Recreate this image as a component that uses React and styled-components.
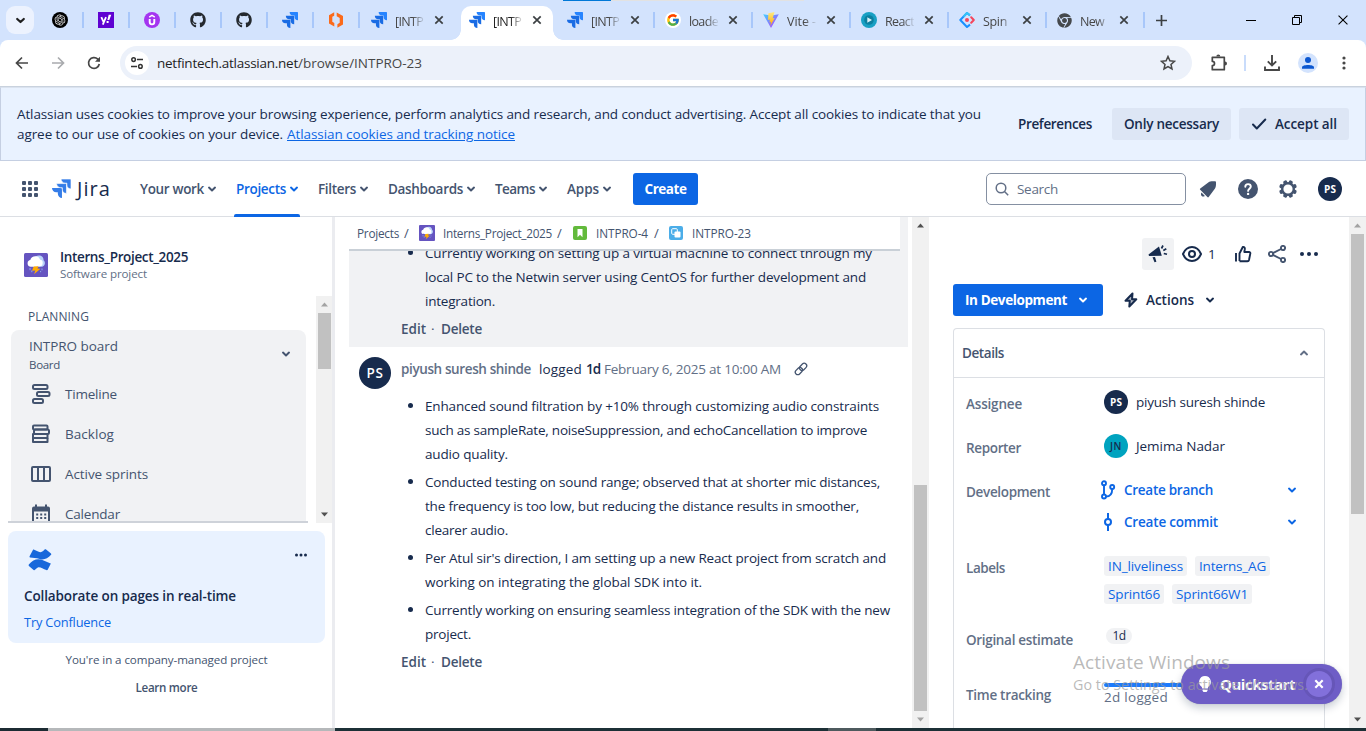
import React, { useLayoutEffect, useRef, useState } from 'react';
import styled, { createGlobalStyle, css } from 'styled-components';
import { FaGithub, FaChrome } from 'react-icons/fa';
import { RiOpenaiFill } from 'react-icons/ri';
import { FcGoogle } from 'react-icons/fc';

const c = {
  ink: '#172b4d',
  subtle: '#44546f',
  faint: '#626f86',
  blue: '#0c66e4',
  line: '#dcdfe4',
  tabs: '#d3e3fd',
  grey: '#f1f2f4',
};

const GlobalStyle = createGlobalStyle`
  * { box-sizing: border-box; }
  html, body { margin: 0; padding: 0; overflow: hidden; }
  body { font-family: 'Open Sans', 'Noto Sans', sans-serif; font-size: 13.5px; color: ${c.ink}; background: #fff; }
  svg { display: block; flex: none; }
`;

/* ---------- text ---------- */

const Line = styled.span`
  display: inline-block;
  white-space: nowrap;
  font-size: ${(p) => p.$size || 13.5}px;
  font-weight: ${(p) => p.$weight || 400};
  color: ${(p) => p.$color || 'inherit'};
  text-decoration: ${(p) => (p.$underline ? 'underline' : 'none')};
`;

/* One line of text whose tracking is adjusted so that it takes up w pixels. */
function Text({ w, size, weight, color, underline, children }) {
  const ref = useRef(null);
  const [spacing, setSpacing] = useState(0);
  useLayoutEffect(() => {
    if (!w) return;
    const natural = ref.current.getBoundingClientRect().width;
    setSpacing((w - natural) / String(children).length);
  }, []);
  return (
    <Line ref={ref} $size={size} $weight={weight} $color={color} $underline={underline} style={{ letterSpacing: spacing }}>
      {children}
    </Line>
  );
}

/* ---------- icons ---------- */

const Svg = ({ s = 16, w, h, vb = '0 0 16 16', children, ...rest }) => (
  <svg width={w || s} height={h || s} viewBox={vb} fill="none" {...rest}>{children}</svg>
);

const Chevron = ({ color = c.subtle, up, s = 10 }) => (
  <Svg s={s} vb="0 0 10 10"><path d={up ? 'M2 6.400 5 3.600l3 2.800' : 'M2 3.600 5 6.400l3-2.800'} stroke={color} strokeWidth="2" strokeLinecap="round" strokeLinejoin="round" /></Svg>
);

const JiraMark = ({ s = 16, light = '#2684ff', dark = '#1a6ce4', gap = 'none' }) => (
  <Svg s={s} vb="0 0 24 24">
    <path fill={dark} d="M11.571 11.513H0a5.218 5.218 0 0 0 5.232 5.215h2.130v2.057A5.215 5.215 0 0 0 12.575 24V12.518a1.005 1.005 0 0 0-1.005-1.005z" />
    <path fill={dark} stroke={gap} strokeWidth=".8" d="M17.294 5.757H5.736a5.215 5.215 0 0 0 5.215 5.214h2.129v2.058a5.218 5.218 0 0 0 5.215 5.214V6.758a1.001 1.001 0 0 0-1.001-1.001z" />
    <path fill={light} stroke={gap} strokeWidth=".8" d="M23.013 0H11.455a5.215 5.215 0 0 0 5.215 5.215h2.129v2.057A5.215 5.215 0 0 0 24 12.483V1.005A1.001 1.001 0 0 0 23.013 0Z" />
  </Svg>
);

const Cross = ({ s = 10, color = '#3c4043', sw = 1.7 }) => (
  <Svg s={s} vb="0 0 10 10"><path d="M1.300 1.300l7.400 7.400M8.700 1.300 1.300 8.700" stroke={color} strokeWidth={sw} /></Svg>
);

const ChatMark = () => (
  <Svg><circle cx="8" cy="8" r="8" fill="#000" /><RiOpenaiFill x="1.5" y="1.5" size={13} color="#e8e8e8" /></Svg>
);

const YahooMark = () => (
  <Svg>
    <path fill="#5f01d1" d="M0 0h16v16H0z" />
    <path d="m3.300 5.200 2.200 4.600M8 5.200 4.800 12.700" stroke="#fff" strokeWidth="1.800" />
    <path fill="#fff" d="M10.700 2.700h2.600l-2 5.300H9.400zM8.600 9.100h2v1.900h-2z" />
  </Svg>
);

const UdemyMark = () => (
  <Svg>
    <circle cx="8" cy="8" r="8" fill="#a435f0" />
    <path d="M5.700 7v3.100c0 3 4.600 3 4.600 0V7" stroke="#fff" strokeWidth="1.900" />
    <path d="M5.200 5.200 8 3.400l2.800 1.800" stroke="#fff" strokeWidth="1.400" />
  </Svg>
);

const BracketMark = () => (
  <Svg><path fill="#fb6a1a" d="M1 3.200 6.200.2v3.500L4.300 4.800v5l2 1.200v3.500L1 11.500zM15 4.100v8.400l-5.600 3.200v-3.500l2.300-1.400V5.900L8.700 4.200V.6z" /></Svg>
);

const ViteMark = () => (
  <Svg>
    <defs>
      <linearGradient id="va" x1="0" y1="0" x2="1" y2="1"><stop stopColor="#41d1ff" /><stop offset="1" stopColor="#bd34fe" /></linearGradient>
      <linearGradient id="vb" x1="0" y1="0" x2="0" y2="1"><stop stopColor="#ffea83" /><stop offset="1" stopColor="#ffa800" /></linearGradient>
    </defs>
    <path fill="url(#va)" d="M.2 2.200 8 16l7.800-13.800L8 3.600z" />
    <path fill="url(#vb)" d="M11.500 0 5.400 1.200 5 7.900l2-.4-.5 2.800 1.600-.4-.8 4.200 4.400-8.200-2 .4z" />
  </Svg>
);

const PlayMark = () => (
  <Svg>
    <circle cx="8" cy="8" r="8" fill="#18a0c4" />
    <circle cx="8" cy="8" r="4.800" fill="#0c7f9f" />
    <path fill="#d9f2f8" d="M6.300 5.200v5.600L11 8z" />
  </Svg>
);

const SpinMark = () => (
  <Svg>
    <path d="M11 3.400 8 1 1.300 8 8 15l3-2.400" stroke="#1890ff" strokeWidth="2" strokeLinejoin="round" />
    <path d="M4.500 4.600 8 1l3 2.400" stroke="#35c3f7" strokeWidth="2" />
    <path d="m12.200 5.300 2.600 2.700-2.600 2.700" stroke="#f5455c" strokeWidth="2" strokeLinecap="round" strokeLinejoin="round" />
    <circle cx="8" cy="8" r="2" fill="#f5455c" />
  </Svg>
);

const StormMark = ({ s }) => (
  <Svg s={s} vb="0 0 24 24">
    <rect width="24" height="24" rx="1.500" fill="#6554c0" />
    <path fill="#b9d3fa" d="M11.500 3.500c4.400-2.400 8.200 0 8.100 3.800 2.300 2 1.500 6.100-1.700 6.500H9z" />
    <path fill="#fff" d="M3.600 10.300c0-2 1.300-3.100 2.700-3.200.6-4.500 8.400-5.700 9.800-.3 2.400 0 3.400 2.700 1.900 5.800-.5 1.200-11.700 1.700-13 .7-.9-.5-1.400-1.700-1.400-3z" />
    <path fill="#ffab00" d="m9.700 13.600 4.900-.3-1.200 2.300 3 .1-6.300 5.600 1.300-3.700-3.400.1z" />
    <path d="M6 15v2.200M7.800 17.500v1.700M18 15.500v1.800M16.600 18v1.200" stroke="#8ea9e8" strokeWidth="1" />
  </Svg>
);

/* ---------- browser frame ---------- */

const Screen = styled.div`
  position: relative;
  width: 1366px;
  height: 731px;
  display: flex;
  flex-direction: column;
  overflow: hidden;
`;

const TabStrip = styled.div`
  height: 40px;
  flex: none;
  display: flex;
  align-items: center;
  background: ${c.tabs};
  position: relative;
`;

const LoadBar = styled.div`
  position: absolute;
  top: 0;
  left: 563px;
  width: 241px;
  height: 1px;
  background: linear-gradient(90deg, #0078d7 48px, #e2e2e2 48px);
`;

const TabMenu = styled.div`
  width: 28px;
  height: 28px;
  flex: none;
  margin: 0 3px 0 6px;
  border-radius: 9px;
  background: #ecf2fe;
  display: grid;
  place-items: center;
`;

const divider = css`
  &::after {
    content: '';
    width: 2px;
    height: 16px;
    background: #a8c7fa;
    position: absolute;
    right: -1px;
    top: ${(p) => p.$ruleTop || 8}px;
  }
`;

const PinnedTab = styled.div`
  position: relative;
  width: 46px;
  height: 32px;
  flex: none;
  display: grid;
  place-items: center;
  ${divider}
`;

const OpenTabs = styled.div`
  margin-left: 1px;
  align-self: flex-end;
  display: flex;
`;

const Tab = styled.div`
  position: relative;
  width: 98px;
  height: 34px;
  flex: none;
  padding: 0 13px 6px 11px;
  display: flex;
  align-items: center;
  z-index: 0;
  ${(p) => p.$divided && divider}
  ${(p) => p.$active && css`
    &::before {
      content: '';
      position: absolute;
      z-index: -1;
      inset: 0 3px 0;
      border-radius: 10px 10px 0 0;
      background: #fff;
    }
  `}
`;

const Flare = styled.span`
  position: absolute;
  bottom: 0;
  ${(p) => p.$side}: -7px;
  width: 10px;
  height: 10px;
  background: radial-gradient(circle at ${(p) => (p.$side === 'left' ? '0 0' : '100% 0')}, transparent 9.5px, #fff 10px);
`;

const TabTitle = styled.span`
  width: 29px;
  height: 20px;
  line-height: 20px;
  margin: 1px 10px 0 8px;
  overflow: hidden;
  color: ${(p) => (p.$active ? '#1f1f1f' : '#474747')};
  mask-image: linear-gradient(90deg, #000 60%, transparent 105%);
`;

const WindowButtons = styled.div`
  margin-left: auto;
  display: flex;
`;

const WindowButton = styled.div`
  width: 46px;
  display: grid;
  place-items: center;
`;

const NewTab = styled.div`
  width: 34px;
  display: grid;
  place-items: center;
`;

const Toolbar = styled.div`
  height: 46px;
  flex: none;
  display: flex;
  align-items: center;
  background: #fff;
  border-radius: 8px 8px 0 0;
  padding: 0 4px 0 10px;
`;

const ToolbarBack = styled.div`
  background: linear-gradient(${c.tabs} 10px, #fff 10px);
  border-bottom: 1px solid #c9d2de;
`;

const ToolButton = styled.div`
  width: ${(p) => p.$w || 36}px;
  flex: none;
  display: grid;
  place-items: center;
`;

const Omnibox = styled.div`
  width: 1072px;
  height: 34px;
  flex: none;
  margin-left: 14px;
  border-radius: 17px;
  background: #ecf1fa;
  display: flex;
  align-items: center;
  padding: 0 16px 0 5px;
  color: #474747;
`;

const SiteInfo = styled.div`
  width: 24px;
  height: 24px;
  border-radius: 50%;
  background: #fff;
  display: grid;
  place-items: center;
  margin-right: 8px;
`;

const StarSlot = styled.div` margin-left: auto; `;

const ToolDivider = styled.div`
  width: 2px;
  height: 16px;
  background: #c9dcfb;
  margin-right: 8px;
`;

/* ---------- cookie banner ---------- */

const Banner = styled.div`
  height: 74px;
  flex: none;
  border: 1px solid #c5cfe2;
  border-top-color: #dbe3ef;
  background: #e9f2ff;
  display: flex;
  align-items: center;
  padding: 0 0 0 16px;
`;

const BannerCopy = styled.div`
  width: 989px;
  flex: none;
  line-height: 20px;
  display: flex;
  flex-direction: column;
`;

const BannerRow = styled.div` display: flex; gap: 4px; height: 20px; `;

const BannerButton = styled.div`
  height: 32px;
  flex: none;
  display: flex;
  align-items: center;
  gap: 8px;
  padding: 0 12px;
  margin-right: 8px;
  border-radius: 3px;
  background: ${(p) => (p.$plain ? 'none' : '#dde6f5')};
`;

/* ---------- product navigation ---------- */

const ProductNav = styled.div`
  height: 56px;
  flex: none;
  border-bottom: 1px solid ${c.line};
  display: flex;
  align-items: center;
  padding: 0 24px 0 22px;
`;

const Wordmark = styled.div`
  width: 63px;
  margin-left: 14px;
  display: flex;
  align-items: center;
  gap: 6px;
`;

const NavItem = styled.div`
  height: 56px;
  margin-left: ${(p) => p.$gap}px;
  margin-top: 1px;
  display: flex;
  align-items: center;
  gap: 3px;
  position: relative;
  color: ${(p) => (p.$active ? c.blue : c.subtle)};
  ${(p) => p.$active && css`
    &::after {
      content: '';
      position: absolute;
      left: -2px;
      right: -1px;
      bottom: 0;
      height: 3px;
      border-radius: 2px 2px 0 0;
      background: ${c.blue};
    }
  `}
`;

const CreateButton = styled.div`
  width: 65px;
  height: 32px;
  margin-left: 21px;
  border-radius: 3px;
  background: ${c.blue};
  color: #fff;
  display: grid;
  place-items: center;
`;

const SearchBox = styled.div`
  width: 200px;
  height: 32px;
  margin: 0 10px 0 auto;
  border: 1px solid #8590a2;
  border-radius: 5px;
  display: flex;
  align-items: center;
  gap: 8px;
  padding: 0 8px;
`;

const NavIcons = styled.div`
  display: flex;
  align-items: center;
  & > * + * { margin-left: 16px; }
  & > :last-child { margin-left: 18px; }
`;

const IconBox = styled.div`
  width: ${(p) => p.$s || 24}px;
  height: ${(p) => p.$s || 24}px;
  display: grid;
  place-items: center;
`;

const Avatar = styled.div`
  width: ${(p) => p.$s}px;
  height: ${(p) => p.$s}px;
  flex: none;
  border-radius: 50%;
  background: ${(p) => p.$bg || c.ink};
  color: ${(p) => p.$fg || '#fff'};
  display: grid;
  place-items: center;
`;

/* ---------- sidebar ---------- */

const Body = styled.div`
  height: 511px;
  flex: none;
  display: flex;
`;

const Sidebar = styled.aside`
  width: 335px;
  border-right: 3px solid #ebecf0;
  overflow: hidden;
`;

const ProjectHead = styled.div`
  height: 79px;
  padding: 30px 0 0 24px;
  display: flex;
  gap: 12px;
`;

const ProjectIcon = styled.div` margin-top: 6px; `;

const ProjectName = styled.div`
  display: flex;
  flex-direction: column;
  align-items: flex-start;
  line-height: 20px;
  & > :last-child { line-height: 14px; }
`;

const SideScroll = styled.div`
  height: 227px;
  display: flex;
  justify-content: space-between;
`;

const SideList = styled.div`
  width: 300px;
  margin-left: 8px;
  height: 227px;
  border-bottom: 2px solid #ced2d9;
  overflow: hidden;
`;

const GroupTitle = styled.div`
  height: 34px;
  padding: 10px 0 0 20px;
  line-height: 20px;
`;

const BoardCard = styled.div`
  margin: 0 1px 0 3px;
  width: 295px;
  height: 200px;
  border-radius: 8px 8px 0 0;
  background: ${c.grey};
  color: ${c.subtle};
`;

const BoardHead = styled.div`
  height: 44px;
  padding: 6px 15px 0 18px;
  display: flex;
  justify-content: space-between;
`;

const BoardName = styled.div`
  display: flex;
  flex-direction: column;
  align-items: flex-start;
  line-height: 20px;
  & > :last-child { line-height: 17px; }
`;

const ChevronSlot = styled.div` padding-top: 13px; `;

const SideItem = styled.div`
  height: 40px;
  display: flex;
  align-items: center;
  gap: 12px;
  padding-left: 18px;
`;

const Promo = styled.div`
  width: 317px;
  height: 112px;
  margin: 8px 0 0 8px;
  padding: 16px 16px 0;
  border-radius: 8px;
  background: #e9f2ff;
`;

const PromoTop = styled.div`
  height: 39px;
  display: flex;
  justify-content: space-between;
`;

const PromoLine = styled.div`
  height: 26px;
  line-height: 20px;
`;

const SideFoot = styled.div`
  display: flex;
  flex-direction: column;
  align-items: center;
  padding: 3px 0 0 1px;
  line-height: 28px;
`;

const Scroller = styled.div`
  width: ${(p) => p.$w || 17}px;
  flex: none;
  background: #f1f1f1;
  display: flex;
  flex-direction: column;
  align-items: center;
  justify-content: space-between;
  padding: 6px 0;
  position: relative;
`;

const Thumb = styled.div`
  position: absolute;
  left: 2px;
  width: 13px;
  top: ${(p) => p.$top}px;
  height: ${(p) => p.$h}px;
  background: #c1c1c1;
`;

function Scrollbar({ w, top, h, up, down }) {
  return (
    <Scroller $w={w}>
      <Svg w={7} h={5} vb="0 0 7 5"><path d="M0 4.500 3.500.5 7 4.500z" fill={up} /></Svg>
      <Thumb $top={top} $h={h} />
      <Svg w={7} h={5} vb="0 0 7 5"><path d="M0 .5 3.500 4.500 7 .5z" fill={down} /></Svg>
    </Scroller>
  );
}

/* ---------- work log ---------- */

const Main = styled.main`
  width: 577px;
  padding-left: 14px;
`;

const GreyComment = styled.div`
  width: 559px;
  height: 130px;
  background: ${c.grey};
`;

const Crumbs = styled.div`
  width: 551px;
  height: 34px;
  padding-left: 8px;
  background: #fff;
  border-bottom: 2px solid #c9d0d7;
  color: ${c.subtle};
  display: flex;
  align-items: center;
`;

const Space = styled.span` width: ${(p) => p.$w}px; flex: none; `;

const Clip = styled.div`
  height: 96px;
  overflow: hidden;
  padding-left: 52px;
`;

const Pulled = styled.div` margin-top: -10px; `;

const Bullets = styled.ul`
  margin: 0;
  padding: 0;
  list-style: none;
`;

const Bullet = styled.li`
  position: relative;
  margin-bottom: 4px;
  padding-left: 24px;
  line-height: 24px;
  display: flex;
  flex-direction: column;
  &::before {
    content: '';
    position: absolute;
    left: 7px;
    top: 9px;
    width: 5px;
    height: 5px;
    border-radius: 50%;
    background: ${c.ink};
  }
  & > span { align-self: flex-start; height: 24px; }
`;

const CommentActions = styled.div`
  height: 24px;
  line-height: 24px;
  display: flex;
  color: ${c.subtle};
  gap: 5px;
`;

const Worklog = styled.div`
  display: flex;
  gap: 10px;
  padding: 10px 0 0 10px;
`;

const WorkHead = styled.div`
  height: 24px;
  display: flex;
  align-items: center;
  margin-bottom: 13px;
`;

/* ---------- details ---------- */

const Side = styled.section`
  width: 420px;
  padding: 21px 24px 0;
`;

const IssueTools = styled.div`
  height: 32px;
  display: flex;
  justify-content: flex-end;
  align-items: center;
  padding-right: 7px;
`;

const Megaphone = styled.div`
  width: 32px;
  height: 32px;
  border-radius: 3px;
  background: ${c.grey};
  display: grid;
  place-items: center;
`;

const ToolSlot = styled.div` margin-left: ${(p) => p.$l}px; `;

const StatusRow = styled.div`
  height: 32px;
  margin: 14px 0 12px;
  display: flex;
  align-items: center;
`;

const StatusButton = styled.div`
  width: 150px;
  height: 32px;
  border-radius: 3px;
  background: ${c.blue};
  color: #fff;
  padding: 0 15px 0 12px;
  display: flex;
  align-items: center;
  justify-content: space-between;
`;

const ActionsButton = styled.div`
  display: flex;
  align-items: center;
  margin-left: 21px;
`;

const Panel = styled.div`
  width: 372px;
  height: 400px;
  border: 1px solid ${c.line};
  border-bottom: 0;
  border-radius: 4px 4px 0 0;
`;

const PanelHead = styled.div`
  height: 49px;
  padding: 0 15px 0 8px;
  border-bottom: 1px solid ${c.line};
  display: flex;
  align-items: center;
  justify-content: space-between;
`;

const Field = styled.div`
  height: ${(p) => p.$h}px;
  padding-left: 12px;
  display: grid;
  grid-template-columns: 138px 1fr;
`;

const Label = styled.div`
  line-height: 20px;
  padding-top: ${(p) => p.$t || 16}px;
`;

const Person = styled.div`
  display: flex;
  align-items: center;
  gap: 8px;
  height: 24px;
  margin-top: 12px;
`;

const DevList = styled.div` padding-top: 8px; `;

const DevRow = styled.div`
  height: 32px;
  display: flex;
  align-items: center;
  margin-left: -6px;
`;

const DevText = styled.div` width: 163px; margin-left: 6px; `;

const Tags = styled.div`
  display: flex;
  flex-wrap: wrap;
  gap: 8px;
  align-content: flex-start;
  padding: 14px 40px 0 0;
`;

const Tag = styled.div`
  height: 20px;
  line-height: 20px;
  padding: 0 4px;
  border-radius: 3px;
  background: ${c.grey};
  color: ${c.blue};
`;

const Pill = styled.div`
  width: 26px;
  height: 16px;
  margin: 5px 0 0 2px;
  border-radius: 8px;
  background: ${c.grey};
  display: grid;
  place-items: center;
  line-height: 16px;
`;

const Track = styled.div`
  height: 4px;
  width: 204px;
  background: #1d7afc;
  border-radius: 2px;
`;

const Tracking = styled.div` padding-top: 4px; line-height: 20px; `;

/* ---------- overlays ---------- */

const Quickstart = styled.div`
  position: absolute;
  left: 1181px;
  top: 664px;
  width: 161px;
  height: 40px;
  border-radius: 20px;
  background: #6e5dc6;
  color: #fff;
  display: flex;
  align-items: center;
  padding-left: 17px;
  box-shadow: 0 4px 8px rgba(9, 30, 66, .22), 0 0 1px rgba(9, 30, 66, .3);
`;

const QuickClose = styled.div`
  width: 26px;
  height: 26px;
  margin-left: 11px;
  border-radius: 50%;
  background: #8270db;
  box-shadow: 0 0 0 3px #6656b8;
  display: grid;
  place-items: center;
`;

const BulbSlot = styled.div` margin-right: 8px; `;

const Watermark = styled.div`
  position: absolute;
  left: 1073px;
  top: 649px;
  color: rgba(155, 155, 155, .7);
  display: flex;
  flex-direction: column;
  align-items: flex-start;
  & > :first-child { line-height: 26px; }
  & > :last-child { line-height: 20px; }
`;

const Taskbar = styled.div`
  height: 3px;
  flex: none;
  background: linear-gradient(90deg, #1c2b33 48px, #b5b8ba 48px 335px, #1c3036 335px 828px, #4e5a5e 828px 876px, #1c3036 876px);
`;

/* ---------- data ---------- */

const GithubMark = () => <FaGithub size={16} color="#24292f" />;
const ChromeMark = () => <FaChrome size={15} color="#45494d" />;
const GoogleMark = () => <Svg><circle cx="8" cy="8" r="8" fill="#fff" /><FcGoogle size={14} x="1" y="1" /></Svg>;

const pinned = [ChatMark, YahooMark, UdemyMark, GithubMark, GithubMark, JiraMark, BracketMark];

const tabs = [
  { icon: JiraMark, title: '[INTP', w: 28 },
  { icon: JiraMark, title: '[INTP', w: 28, active: true },
  { icon: JiraMark, title: '[INTP', w: 28, divided: true },
  { icon: GoogleMark, title: 'loade', w: 29, divided: true },
  { icon: ViteMark, title: 'Vite -', w: 29, divided: true },
  { icon: PlayMark, title: 'React', w: 29, divided: true },
  { icon: SpinMark, title: 'Spin', w: 24, divided: true },
  { icon: ChromeMark, title: 'New', w: 24, divided: true },
];

const navItems = [
  ['Your work', 64, 25], ['Projects', 50, 19, true], ['Filters', 38, 19], ['Dashboards', 75, 19], ['Teams', 40, 19], ['Apps', 32, 19],
];

const stroke = { stroke: c.subtle, strokeWidth: 2, strokeLinejoin: 'round' };
const sideItems = [
  ['Timeline', 52, <><rect x="3" y="2" width="14.500" height="4" rx="1.500" {...stroke} /><rect x="7" y="9" width="12.500" height="4" rx="1.500" {...stroke} /><rect x="3" y="16" width="10" height="4" rx="1.500" {...stroke} /></>],
  ['Backlog', 49, <><rect x="3" y="2.500" width="14.500" height="4" rx="1" {...stroke} /><rect x="4" y="6.500" width="15" height="4.500" rx="1.500" {...stroke} /><rect x="3" y="11" width="14.500" height="4" {...stroke} /><path d="M3 15v4h14.500v-4" {...stroke} /></>],
  ['Active sprints', 83, <><rect x="2" y="4" width="18" height="14" rx="1" {...stroke} /><path d="M8 4v14M14 4v14" {...stroke} /></>],
  ['Calendar', 55, <><rect x="3" y="4.500" width="16" height="15" rx="1" {...stroke} /><path fill={c.subtle} d="M3 4h16v4.500H3zM5 1.500h2v3H5zM15 1.500h2v3h-2z" /><path d="M6.200 11.500h10M6.200 15h10" stroke={c.subtle} strokeWidth="2" strokeDasharray="2 2" /></>],
];

const log = [
  [['Enhanced sound filtration by +10% through customizing audio constraints', 454], ['such as sampleRate, noiseSuppression, and echoCancellation to improve', 442], ['audio quality.', 83]],
  [['Conducted testing on sound range; observed that at shorter mic distances,', 455], ['the frequency is too low, but reducing the distance results in smoother,', 434], ['clearer audio.', 83]],
  [["Per Atul sir's direction, I am setting up a new React project from scratch and", 461], ['working on integrating the global SDK into it.', 277]],
  [['Currently working on ensuring seamless integration of the SDK with the new', 465], ['project.', 46]],
];

const EditDelete = () => (
  <CommentActions>
    <Text w={25} weight={600}>Edit</Text>
    <Text w={5}>·</Text>
    <Text w={41} weight={600}>Delete</Text>
  </CommentActions>
);

const Dots = ({ s = 20, color = c.ink, r = 2 }) => (
  <Svg w={s} h={6} vb={`0 0 ${s} 6`}><circle cx={r} cy="3" r={r} fill={color} /><circle cx={s / 2} cy="3" r={r} fill={color} /><circle cx={s - r} cy="3" r={r} fill={color} /></Svg>
);

/* ---------- page ---------- */

function Browser() {
  return (
    <>
      <TabStrip>
        <LoadBar />
        <TabMenu><Chevron color="#1f1f1f" s={11} /></TabMenu>
        {pinned.map((Icon, i) => <PinnedTab key={i}><Icon /></PinnedTab>)}
        <OpenTabs>
          {tabs.map(({ icon: Icon, title, w, active, divided }, i) => (
            <Tab key={i} $active={active} $divided={divided} $ruleTop={6}>
              {active && <><Flare $side="left" /><Flare $side="right" /></>}
              <Icon />
              <TabTitle $active={active}><Text size={12.5} w={w}>{title}</Text></TabTitle>
              <Cross />
            </Tab>
          ))}
        </OpenTabs>
        <NewTab><Svg s={11} vb="0 0 11 11"><path d="M5.500 0v11M0 5.500h11" stroke="#3c4043" strokeWidth="1.700" /></Svg></NewTab>
        <WindowButtons>
          <WindowButton><Svg s={10} vb="0 0 10 10"><path d="M0 5.500h10" stroke="#000" /></Svg></WindowButton>
          <WindowButton><Svg s={10} vb="0 0 10 10"><path d="M.5 2.500h7v7h-7zM2.500 2.500v-2h7v7h-2" stroke="#000" /></Svg></WindowButton>
          <WindowButton><Cross s={12} color="#000" sw={0.9} /></WindowButton>
        </WindowButtons>
      </TabStrip>
      <ToolbarBack>
        <Toolbar>
          <ToolButton $w={24}><Svg s={14} vb="0 0 14 14"><path d="M13 7H2M7 1.500 1.500 7 7 12.500" stroke="#474747" strokeWidth="1.700" /></Svg></ToolButton>
          <ToolButton $w={48}><Svg s={14} vb="0 0 14 14"><path d="M1 7h11M7 1.500 12.500 7 7 12.500" stroke="#a9abae" strokeWidth="1.700" /></Svg></ToolButton>
          <ToolButton $w={24}><Svg s={14} vb="0 0 14 14"><path d="M12.300 8A5.400 5.400 0 1 1 10.800 3.200L12.500 5" stroke="#474747" strokeWidth="1.700" /><path d="M13 .8v5H8z" fill="#474747" /></Svg></ToolButton>
          <Omnibox>
            <SiteInfo><Svg s={14} vb="0 0 14 14"><circle cx="3.600" cy="3.600" r="1.800" stroke="#333" strokeWidth="1.500" /><circle cx="10.400" cy="10.400" r="1.800" stroke="#333" strokeWidth="1.500" /><path d="M7 3.600h6M1 10.400h6" stroke="#333" strokeWidth="1.500" /></Svg></SiteInfo>
            <Text w={141} size={13.5} color="#1f1f1f">netfintech.atlassian.net</Text>
            <Text w={124} size={13.5}>/browse/INTPRO-23</Text>
            <StarSlot><Svg><path d="m8 1.500 1.900 4.300 4.600.5-3.500 3.100 1 4.600L8 11.600 4 14l1-4.600-3.500-3.100 4.600-.5z" stroke="#474747" strokeWidth="1.500" /></Svg></StarSlot>
          </Omnibox>
          <ToolButton $w={52}><Svg s={18} vb="0 0 18 18"><path d="M3.300 3.300h12v12.400h-12v-4a2.200 2.200 0 0 0 0-4.400z" stroke="#474747" strokeWidth="1.700" strokeLinejoin="round" /><path d="M7.300 2.600a2 2 0 0 1 4 0zM16 7.400a2 2 0 0 1 0 4z" fill="#474747" /></Svg></ToolButton>
          <ToolDivider />
          <ToolButton $w={36}><Svg s={16}><path d="M8 0v10M3.800 6.300 8 10.500l4.200-4.200M1 11.500V15h14v-3.500" stroke="#474747" strokeWidth="1.900" /></Svg></ToolButton>
          <ToolButton $w={36}><Svg s={20} vb="0 0 20 20"><circle cx="10" cy="10" r="10" fill="#d3e3fd" /><circle cx="10" cy="7" r="3" fill="#0b57d0" /><path d="M4 15.800v-1.500c0-3.200 12-3.200 12 0v1.500z" fill="#0b57d0" /></Svg></ToolButton>
          <ToolButton $w={36}><Svg w={4} h={14} vb="0 0 4 14"><circle cx="2" cy="2" r="1.600" fill="#474747" /><circle cx="2" cy="7" r="1.600" fill="#474747" /><circle cx="2" cy="12" r="1.600" fill="#474747" /></Svg></ToolButton>
        </Toolbar>
      </ToolbarBack>
    </>
  );
}

function CookieBanner() {
  return (
    <Banner>
      <BannerCopy>
        <BannerRow><Text w={964}>Atlassian uses cookies to improve your browsing experience, perform analytics and research, and conduct advertising. Accept all cookies to indicate that you</Text></BannerRow>
        <BannerRow>
          <Text w={266}>agree to our use of cookies on your device.</Text>
          <Text w={228} color={c.blue} underline>Atlassian cookies and tracking notice</Text>
        </BannerRow>
      </BannerCopy>
      <BannerButton $plain><Text w={74} weight={600}>Preferences</Text></BannerButton>
      <BannerButton><Text w={95} weight={600}>Only necessary</Text></BannerButton>
      <BannerButton>
        <Svg><path d="m2 8.500 3.800 4L14.300 3.500" stroke={c.ink} strokeWidth="2" strokeLinecap="round" strokeLinejoin="round" /></Svg>
        <Text w={62} weight={600}>Accept all</Text>
      </BannerButton>
    </Banner>
  );
}

function Nav() {
  return (
    <ProductNav>
      <Svg s={16}>{[0, 6, 12].map((x) => [0, 6, 12].map((y) => <rect key={x + '-' + y} x={x} y={y} width="4" height="4" rx="1" fill={c.subtle} />))}</Svg>
      <Wordmark><JiraMark s={19} light="#357de8" dark="#357de8" gap="#fff" /><Text w={34} size={20} weight={500}>Jira</Text></Wordmark>
      {navItems.map(([label, w, gap, active]) => (
        <NavItem key={label} $gap={gap} $active={active}>
          <Text w={w} weight={600}>{label}</Text>
          <Chevron color={active ? c.blue : c.subtle} />
        </NavItem>
      ))}
      <CreateButton><Text w={42} weight={700}>Create</Text></CreateButton>
      <SearchBox>
        <Svg s={14} vb="0 0 14 14"><circle cx="6" cy="6" r="4.800" stroke={c.faint} strokeWidth="1.500" /><path d="m9.500 9.500 3.700 3.700" stroke={c.faint} strokeWidth="1.500" /></Svg>
        <Text w={41} color={c.faint}>Search</Text>
      </SearchBox>
      <NavIcons>
        <IconBox><Svg s={18} vb="0 0 18 18"><path fill={c.subtle} d="M1.300 8.600 9.600 2.200c1.200-.9 2.600-1 6.500-.9.600 0 .9.400.9.900.1 3.700-.2 5.200-1 6.300L9.700 17c-.4.500-.9.500-1.300 0L1.200 9.800c-.4-.4-.4-.9.100-1.200zM2.500 12.500l3.400 3.400c-1.200 1-2.400.9-3.200.1-.9-.9-1-2.300-.2-3.500z" /></Svg></IconBox>
        <IconBox><Svg s={20} vb="0 0 20 20"><circle cx="10" cy="10" r="10" fill={c.subtle} /><path d="M7.300 7.800c0-3.700 5.500-3.500 5.500-.2 0 2-2.700 2.200-2.700 4.300" stroke="#fff" strokeWidth="1.900" strokeLinecap="round" /><circle cx="10.100" cy="14.900" r="1.200" fill="#fff" /></Svg></IconBox>
        <IconBox><Svg s={20} vb="0 0 20 20"><g fill={c.subtle}>{[0, 45, 90, 135, 180, 225, 270, 315].map((a) => <rect key={a} x="8" y="1" width="4" height="5" rx="1.500" transform={`rotate(${a + 22.5} 10 10)`} />)}</g><circle cx="10" cy="10" r="5.800" stroke={c.subtle} strokeWidth="2.400" fill="#fff" /></Svg></IconBox>
        <Avatar $s={24}><Text size={10} w={12} weight={700}>PS</Text></Avatar>
      </NavIcons>
    </ProductNav>
  );
}

function ProjectSidebar() {
  return (
    <Sidebar>
      <ProjectHead>
        <ProjectIcon><StormMark s={24} /></ProjectIcon>
        <ProjectName>
          <Text w={128} weight={600}>Interns_Project_2025</Text>
          <Text w={87} size={11.6} color={c.faint}>Software project</Text>
        </ProjectName>
      </ProjectHead>
      <SideScroll>
        <SideList>
          <GroupTitle><Text w={61} size={12} weight={500} color={c.subtle}>PLANNING</Text></GroupTitle>
          <BoardCard>
            <BoardHead>
              <BoardName><Text w={89}>INTPRO board</Text><Text w={31} size={11.5}>Board</Text></BoardName>
              <ChevronSlot><Chevron /></ChevronSlot>
            </BoardHead>
            {sideItems.map(([label, w, art]) => (
              <SideItem key={label}><Svg s={24} vb="-1 -1 24 24">{art}</Svg><Text w={w}>{label}</Text></SideItem>
            ))}
          </BoardCard>
        </SideList>
        <Scrollbar w={16} top={17} h={56} up="#a3a3a3" down="#505050" />
      </SideScroll>
      <Promo>
        <PromoTop>
          <Svg s={32} vb="0 0 32 32">
            <path fill="#1868db" d="M5.300 8.300 8.600 2c.3-.5.800-.6 1.300-.3l3.900 1.900c2.300 1.100 3.500.8 5-.5l1.500-1.500c.5-.4 1-.5 1.500-.1l4.900 4c.4.4.4.9.1 1.300-4.200 5-8.700 5.600-14.100 3.500L5.700 9.500c-.5-.3-.7-.7-.4-1.200zM26.700 15.300l-3.300 6.500c-.3.500-.8.600-1.300.3-3.600-1.700-6.600-3.600-8.600-2.700-.9.400-1.800 1.300-2.800 2.400-.4.500-.9.500-1.400.1l-4.700-4c-.4-.4-.4-.9-.1-1.300 4.500-5.500 9.400-6.400 14.800-4.100l7 3.100" transform="translate(.3 1)" />
          </Svg>
          <IconBox $s={16}><Dots s={12} r={1.5} /></IconBox>
        </PromoTop>
        <PromoLine><Text w={212} weight={600}>Collaborate on pages in real-time</Text></PromoLine>
        <PromoLine><Text w={87} size={12.8} color={c.blue}>Try Confluence</Text></PromoLine>
      </Promo>
      <SideFoot>
        <Text w={202} size={11.6} color={c.subtle}>You're in a company-managed project</Text>
        <Text w={62} size={11.6} weight={600} color={c.subtle}>Learn more</Text>
      </SideFoot>
    </Sidebar>
  );
}

const Slash = () => <Text w={5} size={13}>/</Text>;

function WorkLog() {
  return (
    <Main>
      <GreyComment>
        <Crumbs>
          <Text w={42} size={11.8}>Projects</Text><Space $w={5} /><Slash /><Space $w={10} />
          <StormMark s={16} /><Space $w={8} /><Text w={109} size={11.8}>Interns_Project_2025</Text><Space $w={5} /><Slash /><Space $w={11} />
          <Svg s={14} vb="0 0 14 14"><rect width="14" height="14" rx="2" fill="#63ba3c" /><path fill="#fff" d="M4.500 3h5v8.200L7 8.800l-2.500 2.400z" /></Svg>
          <Space $w={9} /><Text w={52} size={11.8}>INTPRO-4</Text><Space $w={6} /><Slash /><Space $w={10} />
          <Svg s={14} vb="0 0 14 14"><rect width="14" height="14" rx="2" fill="#4bade8" /><rect x="2.700" y="2.700" width="5.600" height="5.600" rx="1" stroke="#fff" /><rect x="5.500" y="5.500" width="6" height="6" rx="1" fill="#fff" /></Svg>
          <Space $w={9} /><Text w={59} size={11.8}>INTPRO-23</Text>
        </Crumbs>
        <Clip>
          <Pulled>
            <Bullets>
              <Bullet>
                <Text w={447}>Currently working on setting up a virtual machine to connect through my</Text>
                <Text w={441}>local PC to the Netwin server using CentOS for further development and</Text>
                <Text w={70}>integration.</Text>
              </Bullet>
            </Bullets>
            <EditDelete />
          </Pulled>
        </Clip>
      </GreyComment>
      <Worklog>
        <Avatar $s={32}><Text size={13.5} w={17} weight={600}>PS</Text></Avatar>
        <div>
          <WorkHead>
            <Text w={130} weight={600} color={c.faint}>piyush suresh shinde</Text>
            <Space $w={8} /><Text w={43}>logged</Text>
            <Space $w={4} /><Text w={14} weight={600}>1d</Text>
            <Space $w={4} /><Text w={177} color={c.faint}>February 6, 2025 at 10:00 AM</Text>
            <Space $w={13} />
            <Svg s={14} vb="0 0 14 14"><g transform="rotate(-45 7 7)" stroke={c.subtle} strokeWidth="1.300"><rect x="0" y="4.500" width="8" height="5" rx="2.500" /><rect x="6" y="4.500" width="8" height="5" rx="2.500" /></g></Svg>
          </WorkHead>
          <Bullets>
            {log.map((lines) => <Bullet key={lines[0][0]}>{lines.map(([t, w]) => <Text key={t} w={w}>{t}</Text>)}</Bullet>)}
          </Bullets>
          <EditDelete />
        </div>
      </Worklog>
    </Main>
  );
}

const FieldName = ({ w, t, children }) => <Label $t={t}><Text w={w} weight={600} color={c.faint}>{children}</Text></Label>;

function Details() {
  return (
    <Side>
      <IssueTools>
        <Megaphone><Svg s={20} vb="0 0 20 20"><path fill={c.ink} d="m.5 10.500 10.500-8 2.800 9.200L1 12zM4.500 13.200l2.500-.2 1.400 4.700-1.900.5z" /><path d="M13.500 4.500 15 1.500M15.300 6.500l3-1.800M15.800 9.500l3.200.8" stroke={c.ink} strokeWidth="1.700" /></Svg></Megaphone>
        <ToolSlot $l={8}><Svg w={20} h={16} vb="0 0 20 16"><path d="M1 8c4-9.300 14-9.300 18 0-4 9.300-14 9.300-18 0z" stroke={c.ink} strokeWidth="2" /><circle cx="10" cy="8" r="3" stroke={c.ink} strokeWidth="2" /></Svg></ToolSlot>
        <ToolSlot $l={6}><Text w={7}>1</Text></ToolSlot>
        <ToolSlot $l={19}><Svg s={18} vb="0 0 18 18"><path d="M2 8v8.500M5.500 16V8.500L8.800 2c1.700-.3 2.200.8 2 2.200L10.300 7H15c1 0 1.500.8 1.300 1.600L15 15c-.2.800-.7 1.200-1.500 1.200H5.500" stroke={c.ink} strokeWidth="1.900" strokeLinejoin="round" /></Svg></ToolSlot>
        <ToolSlot $l={16}><Svg s={18} vb="0 0 18 18"><g stroke={c.subtle} strokeWidth="1.900"><circle cx="3" cy="9" r="2.100" /><circle cx="15" cy="3" r="2.100" /><circle cx="15" cy="15" r="2.100" /><path d="M4.900 8.100 13 4M4.900 9.900 13 14" /></g></Svg></ToolSlot>
        <ToolSlot $l={14}><Dots s={18} /></ToolSlot>
      </IssueTools>
      <StatusRow>
        <StatusButton><Text w={102} weight={700}>In Development</Text><Chevron color="#fff" /></StatusButton>
        <ActionsButton>
          <Svg w={14} h={16} vb="0 0 14 16"><path d="M8.500 1.500 1.500 8.700h4.300L5.300 14.500l7-7.200H8z" fill={c.ink} fillOpacity=".35" stroke={c.ink} strokeWidth="2" strokeLinejoin="round" /></Svg>
          <Space $w={8} /><Text w={48} weight={600}>Actions</Text><Space $w={11} /><Chevron color={c.ink} />
        </ActionsButton>
      </StatusRow>
      <Panel>
        <PanelHead><Text w={42} weight={600} color={c.subtle}>Details</Text><Chevron up color={c.faint} /></PanelHead>
        <Field $h={44}><FieldName w={56}>Assignee</FieldName><Person><Avatar $s={24}><Text size={10} w={12} weight={700}>PS</Text></Avatar><Text w={129}>piyush suresh shinde</Text></Person></Field>
        <Field $h={44}><FieldName w={55}>Reporter</FieldName><Person><Avatar $s={24} $bg="#00a3bf" $fg={c.ink}><Text size={10} w={12} weight={600}>JN</Text></Avatar><Text w={89}>Jemima Nadar</Text></Person></Field>
        <Field $h={76}>
          <FieldName w={84}>Development</FieldName>
          <DevList>
            <DevRow>
              <Svg w={20} h={20} vb="0 0 20 20"><g stroke={c.blue} strokeWidth="1.900"><circle cx="6" cy="3.300" r="2" /><circle cx="6" cy="16.500" r="2" /><circle cx="14.200" cy="7" r="2" /><path d="M6 5.500v9M8 16.500c5 0 6.200-3 6.200-7.500" /></g></Svg>
              <DevText><Text w={89} weight={600} color={c.blue}>Create branch</Text></DevText><Chevron color={c.blue} />
            </DevRow>
            <DevRow>
              <Svg w={20} h={20} vb="0 0 20 20"><g stroke={c.blue} strokeWidth="2"><circle cx="10" cy="10" r="3" /><path d="M10 1v6M10 13v6" /></g></Svg>
              <DevText><Text w={94} weight={600} color={c.blue}>Create commit</Text></DevText><Chevron color={c.blue} />
            </DevRow>
          </DevList>
        </Field>
        <Field $h={81}>
          <FieldName w={39}>Labels</FieldName>
          <Tags>
            <Tag><Text w={75}>IN_liveliness</Text></Tag><Tag><Text w={67}>Interns_AG</Text></Tag>
            <Tag><Text w={52}>Sprint66</Text></Tag><Tag><Text w={72}>Sprint66W1</Text></Tag>
          </Tags>
        </Field>
        <Field $h={56}><FieldName w={107} t={7}>Original estimate</FieldName><div><Pill><Text w={13} size={12}>1d</Text></Pill></div></Field>
        <Field $h={44}><FieldName w={85} t={6}>Time tracking</FieldName><Tracking><Track /><Text w={64} color={c.faint}>2d logged</Text></Tracking></Field>
      </Panel>
    </Side>
  );
}

export default function App() {
  return (
    <Screen>
      <GlobalStyle />
      <Browser />
      <CookieBanner />
      <Nav />
      <Body>
        <ProjectSidebar />
        <WorkLog />
        <Scrollbar top={268} h={226} up="#505050" down="#a3a3a3" />
        <Details />
        <Scrollbar top={17} h={280} up="#a3a3a3" down="#505050" />
      </Body>
      <Taskbar />
      <Quickstart>
        <BulbSlot><Svg w={14} h={18} vb="0 0 14 18"><path fill="#fff" d="M7 1a6 6 0 0 0-3.200 11l.4 1.500h5.600l.4-1.500A6 6 0 0 0 7 1zM4.500 14.500h5v1.200L8.500 17h-3l-1-1.300z" /></Svg></BulbSlot>
        <Text w={75} size={15} weight={700}>Quickstart</Text>
        <QuickClose><Cross s={10} color="#fff" sw={2.2} /></QuickClose>
      </Quickstart>
      <Watermark>
        <Text w={157} size={19}>Activate Windows</Text>
        <Text w={235} size={14.3}>Go to Settings to activate Windows.</Text>
      </Watermark>
    </Screen>
  );
}
